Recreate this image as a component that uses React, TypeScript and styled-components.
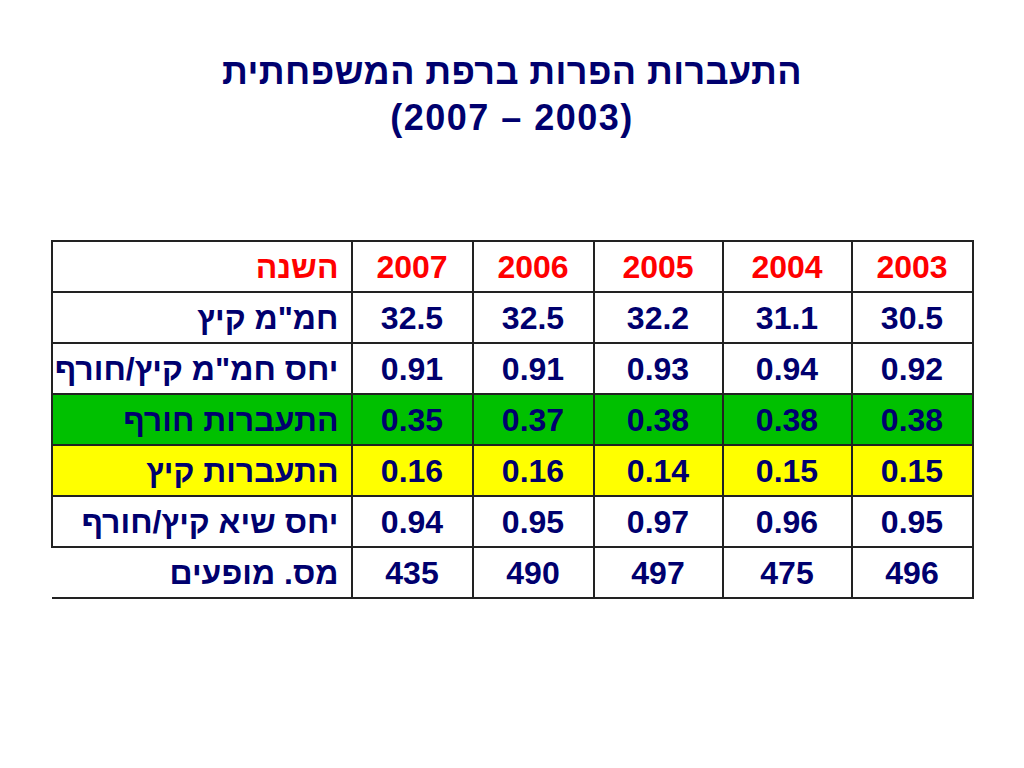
import React from "react";
import styled, { createGlobalStyle } from "styled-components";

const GlobalStyle = createGlobalStyle`
  html, body {
    margin: 0;
    padding: 0;
    background: #ffffff;
  }
  body {
    font-family: "Liberation Sans", Arial, "DejaVu Sans", sans-serif;
  }
`;

const NAVY = "#00006e";
const RED = "#ff0000";

const Page = styled.div`
  width: 1024px;
  height: 768px;
  background: #ffffff;
  display: flex;
  flex-direction: column;
  align-items: center;
  padding-top: 49px;
  box-sizing: border-box;
`;

const Title = styled.h1`
  margin: 0;
  font-family: "Liberation Sans", Arial, "DejaVu Sans", sans-serif;
  font-weight: bold;
  font-size: 36px;
  line-height: 46px;
  color: ${NAVY};
  text-align: center;
`;

const TitleLine = styled.div<{ $rtl?: boolean; $spacing: number }>`
  direction: ${(p) => (p.$rtl ? "rtl" : "ltr")};
  letter-spacing: ${(p) => p.$spacing}px;
`;

const Table = styled.table`
  margin-top: 99px;
  border-collapse: collapse;
  table-layout: fixed;
  font-family: "Liberation Sans", Arial, "DejaVu Sans", sans-serif;
  font-weight: bold;
  font-size: 32px;
`;

type Tone = "white" | "green" | "yellow";

const toneBg: Record<Tone, string> = {
  white: "#ffffff",
  green: "#00c000",
  yellow: "#ffff00",
};

const Row = styled.tr<{ $tone: Tone }>`
  height: 51px;
  background: ${(p) => toneBg[p.$tone]};
`;

const LabelCell = styled.td<{ $red?: boolean; $open?: boolean }>`
  width: 300px;
  box-sizing: border-box;
  padding: 0 12px 0 0;
  border: 2px solid #222222;
  ${(p) => (p.$open ? "border-left: none;" : "")}
  direction: rtl;
  text-align: right;
  white-space: nowrap;
  color: ${(p) => (p.$red ? RED : NAVY)};
  line-height: 1;
`;

const ValueCell = styled.td<{ $red?: boolean; $w: number }>`
  width: ${(p) => p.$w}px;
  box-sizing: border-box;
  padding: 0;
  border: 2px solid #222222;
  text-align: center;
  color: ${(p) => (p.$red ? RED : NAVY)};
  line-height: 1;
`;

const widths = [121, 121, 129, 129, 121];

const rows: { label: string; values: string[]; tone: Tone; header?: boolean }[] = [
  { label: "השנה", values: ["2007", "2006", "2005", "2004", "2003"], tone: "white", header: true },
  { label: 'חמ"מ קיץ', values: ["32.5", "32.5", "32.2", "31.1", "30.5"], tone: "white" },
  { label: 'יחס חמ"מ קיץ/חורף', values: ["0.91", "0.91", "0.93", "0.94", "0.92"], tone: "white" },
  { label: "התעברות חורף", values: ["0.35", "0.37", "0.38", "0.38", "0.38"], tone: "green" },
  { label: "התעברות קיץ", values: ["0.16", "0.16", "0.14", "0.15", "0.15"], tone: "yellow" },
  { label: "יחס שיא קיץ/חורף", values: ["0.94", "0.95", "0.97", "0.96", "0.95"], tone: "white" },
  { label: "מס. מופעים", values: ["435", "490", "497", "475", "496"], tone: "white" },
];

export default function App() {
  return (
    <>
      <GlobalStyle />
      <Page>
        <Title>
          <TitleLine $rtl $spacing={0.4}>התעברות הפרות ברפת המשפחתית</TitleLine>
          <TitleLine $spacing={1.5}>(2007 – 2003)</TitleLine>
        </Title>
        <Table>
          <tbody>
            {rows.map((r, i) => (
              <Row key={i} $tone={r.tone}>
                <LabelCell $red={r.header} $open={i === rows.length - 1}>
                  {r.label}
                </LabelCell>
                {r.values.map((v, j) => (
                  <ValueCell key={j} $red={r.header} $w={widths[j]}>
                    {v}
                  </ValueCell>
                ))}
              </Row>
            ))}
          </tbody>
        </Table>
      </Page>
    </>
  );
}
